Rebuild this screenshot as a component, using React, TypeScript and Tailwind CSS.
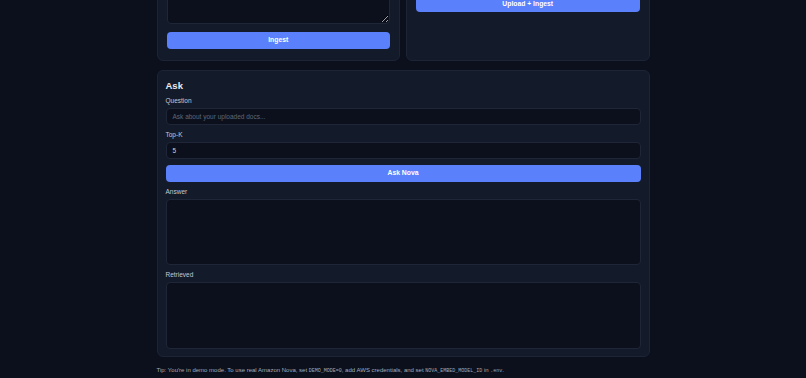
import React from "react";

const font = { fontFamily: "'Liberation Sans', Arial, sans-serif" };

export default function App() {
  return (
    <div className="min-h-screen w-full bg-[#0b101c] overflow-hidden" style={font}>
      <div className="mx-auto w-[493px] -mt-[39px] pb-[20px]">
        <div className="grid grid-cols-2 gap-[6px]">
          <div className="h-[100px] rounded-[6px] border border-[#1c2436] bg-[#131a2a] p-[9px] flex flex-col">
            <textarea className="h-[53px] w-full rounded-[4px] border border-[#1e2638] bg-[#0b101c] outline-none" />
            <button className="mt-[8px] h-[17px] w-full rounded-[4px] bg-[#5a80fb] text-[6.8px] font-bold text-white">Ingest</button>
          </div>
          <div className="h-[100px] rounded-[6px] border border-[#1c2436] bg-[#131a2a] p-[9px] flex flex-col">
            <div className="h-[17px] w-full rounded-[4px] border border-[#1e2638] bg-[#0b101c]" />
            <button className="mt-[8px] h-[16px] w-full rounded-[4px] bg-[#5a80fb] text-[6.8px] font-bold text-white">Upload + Ingest</button>
          </div>
        </div>

        <div className="mt-[9px] rounded-[6px] border border-[#1c2436] bg-[#131a2a] px-[8px] pt-[9px] pb-[7px] flex flex-col">
          <div className="h-[12px] text-[9.5px] leading-[12px] font-bold text-[#e8eaef]">Ask</div>
          <div className="mt-[5px] h-[8px] text-[6.5px] leading-[8px] text-[#c3c9d5]">Question</div>
          <div className="mt-[3px] h-[17px] w-full rounded-[4px] border border-[#1e2638] bg-[#0b101c] px-[6px] flex items-center text-[6.5px] text-[#5f6878]">
            Ask about your uploaded docs...
          </div>
          <div className="mt-[6px] h-[8px] text-[6.5px] leading-[8px] text-[#c3c9d5]">Top-K</div>
          <div className="mt-[3px] h-[17px] w-full rounded-[4px] border border-[#1e2638] bg-[#0b101c] px-[6px] flex items-center text-[6.5px] text-[#d1d5db]">
            5
          </div>
          <button className="mt-[6px] h-[17px] w-full rounded-[4px] bg-[#5a80fb] text-[6.8px] font-bold text-white">Ask Nova</button>
          <div className="mt-[6px] h-[8px] text-[6.5px] leading-[8px] text-[#c3c9d5]">Answer</div>
          <div className="mt-[3px] h-[66px] w-full rounded-[4px] border border-[#1e2638] bg-[#0b101c]" />
          <div className="mt-[6px] h-[8px] text-[6.5px] leading-[8px] text-[#c3c9d5]">Retrieved</div>
          <div className="mt-[3px] h-[67px] w-full rounded-[4px] border border-[#1e2638] bg-[#0b101c]" />
        </div>

        <div className="mt-[8px] text-[6px] leading-[10px] text-[#a3abb9]">
          Tip: You're in demo mode. To use real Amazon Nova, set{" "}
          <code className="font-['Liberation_Mono',monospace] text-[5px]">DEMO_MODE=0</code>, add AWS credentials, and set{" "}
          <code className="font-['Liberation_Mono',monospace] text-[5px]">NOVA_EMBED_MODEL_ID</code> in{" "}
          <code className="font-['Liberation_Mono',monospace] text-[5px]">.env</code>.
        </div>
      </div>
    </div>
  );
}
